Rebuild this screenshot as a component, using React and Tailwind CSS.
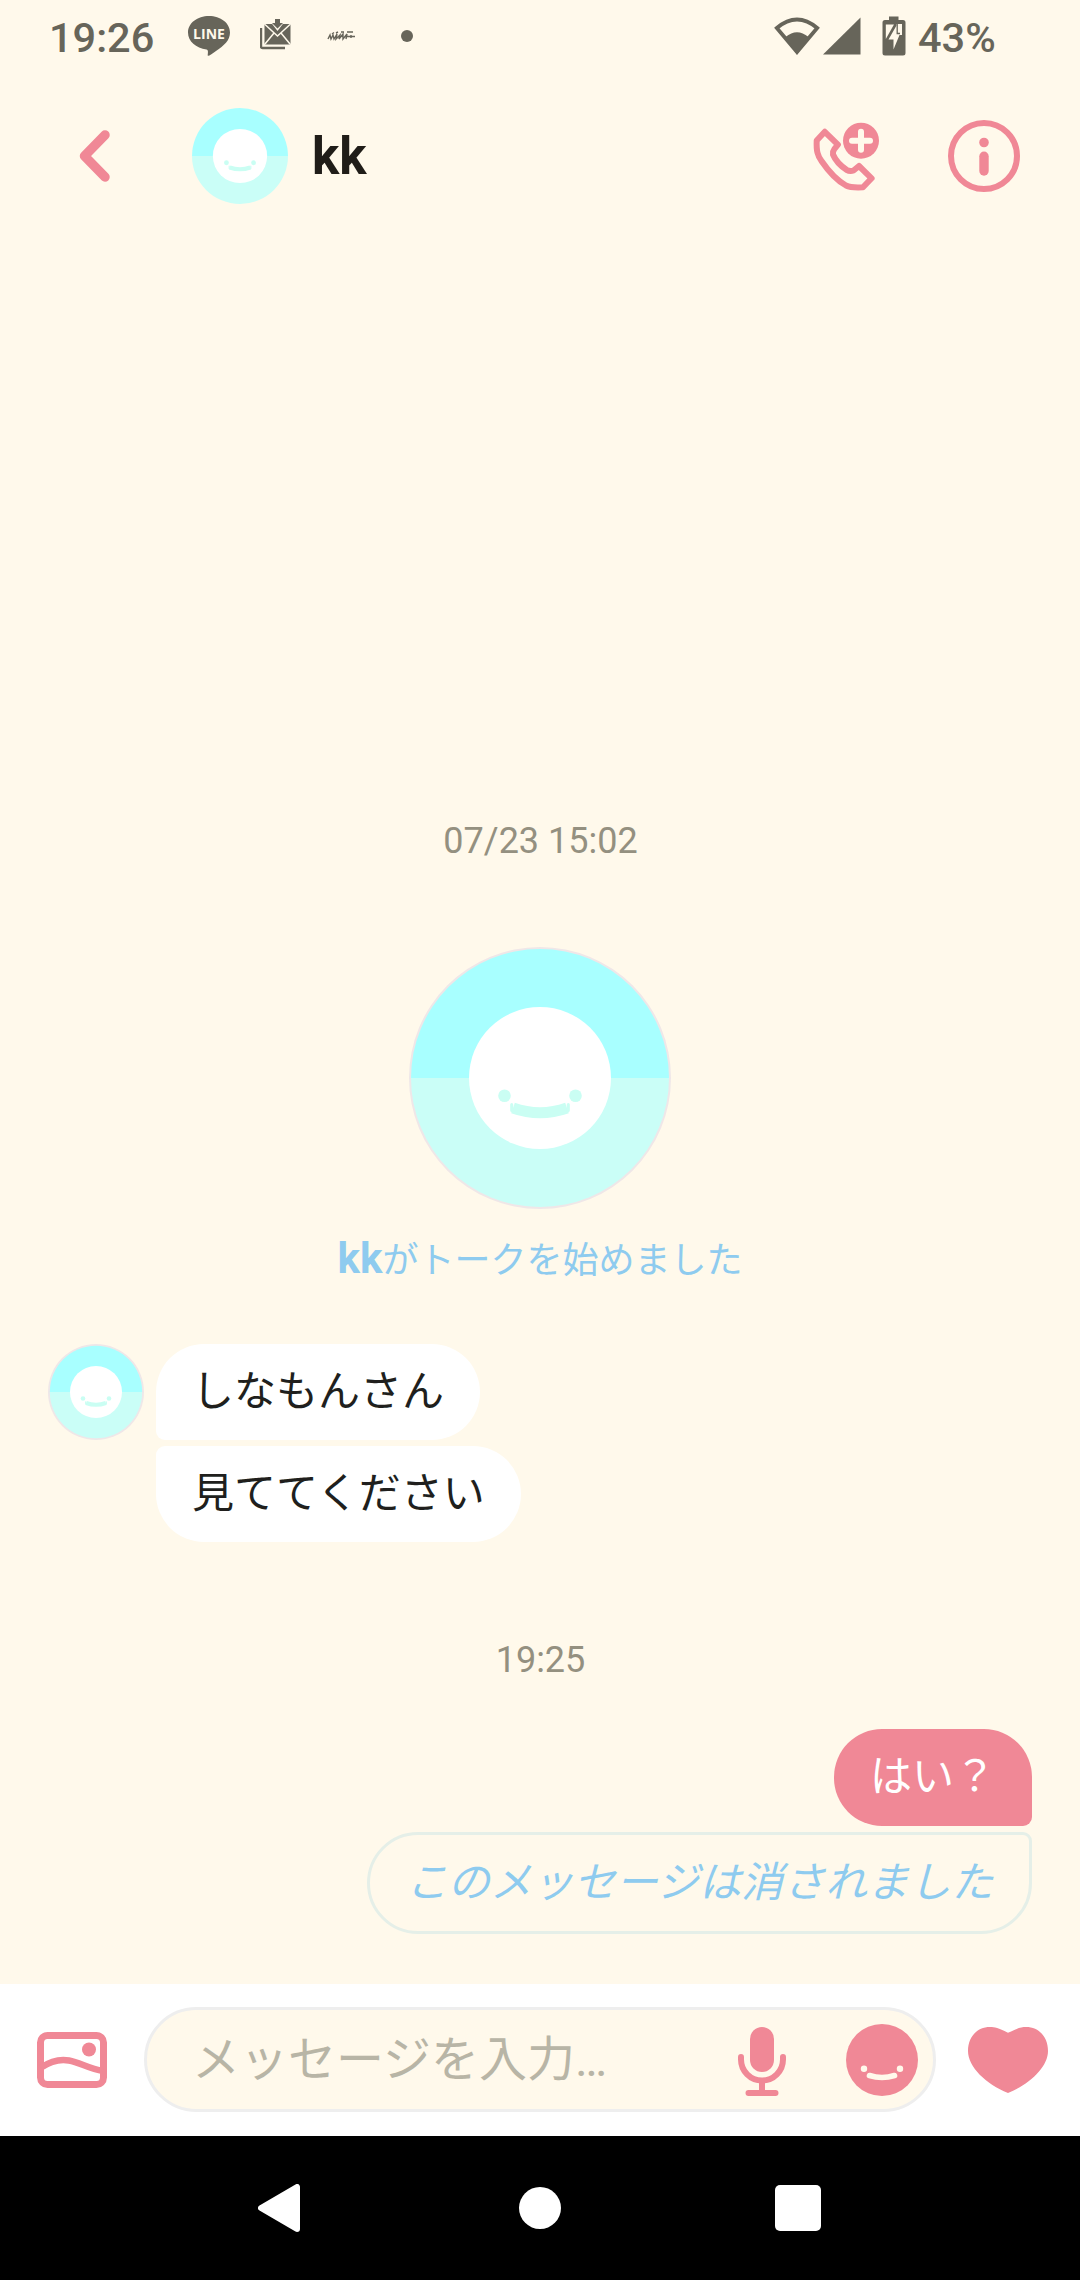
const PINK = "#f08896";
const STATUS = "#67655a";

function Avatar({ className, face = 71, ring = 2 }) {
  const r = 131 - ring;
  const k = face / 71;
  return (
    <svg className={className} viewBox="-131 -131 262 262" aria-hidden="true">
      {ring > 0 && <circle r="131" fill="#efe7e8" />}
      <path d={`M${-r} 0A${r} ${r} 0 0 1 ${r} 0Z`} fill="#a8ffff" />
      <path d={`M${-r} 0A${r} ${r} 0 0 0 ${r} 0Z`} fill="#cafef7" />
      <g transform={`scale(${k})`}>
        <circle r="71" fill="#fff" />
        <circle cx="-35.5" cy="17.7" r="6.3" fill="#cafef3" />
        <circle cx="35.5" cy="17.7" r="6.3" fill="#cafef3" />
        <path d="M-27 30Q0 39.5 27 30" fill="none" stroke="#cafef3" strokeWidth="11" />
        <path d="M-28.300 26.500V32.500M28.300 26.500V32.500" stroke="#cafef3" strokeWidth="3" strokeLinecap="round" />
      </g>
    </svg>
  );
}

function StatusBar() {
  return (
    <div className="flex h-[72px] items-center pl-[49px] pr-[84px] text-[#67655a]">
      <span className="w-[139px] pt-[3px] text-[41.500px] font-medium leading-[72px]">19:26</span>
      <div className="relative h-[42px] w-[42px]">
        <svg className="block h-[42px] w-[42px]" viewBox="0 0 42 42">
          <path d="M21 1C9.500 1 0 8 0 17.500C0 26.500 8 33 18.500 34.500C20.500 35 20 37 19.700 40.500C20.500 41.500 23 39.500 28 36C36 30.500 42 25.500 42 17.500C42 8 32.500 1 21 1Z" fill={STATUS} />
        </svg>
        <span className="absolute inset-x-0 top-[12px] text-center font-['Open_Sans'] text-[14px] font-bold leading-[14px] text-[#fff9eb]">LINE</span>
      </div>
      <svg className="ml-[30px] h-[32px] w-[31px] -translate-y-[2px]" viewBox="0 0 31 32">
        <path d="M1 10V28.500Q1 30 2.500 30H25" fill="none" stroke={STATUS} strokeWidth="2.400" />
        <rect x="4.500" y="6" width="26" height="20.500" rx="1.500" fill={STATUS} />
        <path d="M5 6.500L17.500 18L30 6.500M5 26L14 15M30 26L21 15" fill="none" stroke="#fff9eb" strokeWidth="1.500" />
        <path d="M11 4.500H24L17.500 13Z" fill="#fff9eb" />
        <path d="M15 1H20V5H23L17.500 10.500L12 5H15Z" fill={STATUS} />
      </svg>
      <svg className="ml-[36px] h-[10px] w-[29px]" viewBox="0 0 29 10">
        <path d="M1 8L3 4L4 8L6 4L7 8L10 3L9 8L13 4L12 8L16 3L16 8L20 3L19 8M18 5.500H28M5 3L7 1.500M9 2L11 1M14 1H17M20 1H26M24 4V7" fill="none" stroke={STATUS} strokeWidth="1.400" />
      </svg>
      <span className="ml-[45px] h-3 w-3 rounded-full bg-[#67655a]" />
      <svg className="ml-auto h-[40px] w-[46px]" viewBox="0 0 46 40">
        <path d="M2.800 12Q23 -5 43.200 12L23 36Z" fill="none" stroke={STATUS} strokeWidth="3.800" />
        <path d="M11.500 21Q23 11.500 34.500 21L23 38.500Z" fill={STATUS} />
      </svg>
      <svg className="ml-[3px] h-[40px] w-[38px]" viewBox="0 0 38 40">
        <path d="M37.500 1.500V38.500H0Z" fill={STATUS} />
      </svg>
      <svg className="ml-[21px] h-[40px] w-[24px]" viewBox="0 0 24 40">
        <path d="M7 0.500H16.500V4H21Q23.500 4 23.500 6.500V37Q23.500 39.500 21 39.500H3Q.5 39.500 .5 37V6.500Q.5 4 3 4H7Z" fill={STATUS} />
        <path d="M3.800 8.500H12L3.800 23Z" fill="#fff9eb" />
        <path d="M14.500 8H20V19H17.500L11.500 33.500V23.500H6.500L14.500 9.500Z" fill="#fff9eb" />
        <path d="M15.200 8V17.500H18" fill="none" stroke={STATUS} strokeWidth="1.300" />
      </svg>
      <span className="ml-[12px] w-[78px] whitespace-nowrap pt-[3px] text-[41.500px] font-medium leading-[72px]">43%</span>
    </div>
  );
}

function Header() {
  return (
    <header className="flex h-[168px] items-center pl-[74px] pr-[60px]">
      <svg className="h-[60px] w-[40px]" viewBox="0 0 40 60">
        <path d="M31 9L10.500 30L31 51" fill="none" stroke={PINK} strokeWidth="9.500" strokeLinecap="round" strokeLinejoin="round" />
      </svg>
      <Avatar className="ml-[78px] h-24 w-24" face={74} ring={0} />
      <h1 className="ml-[24px] pt-[2px] text-[51px] font-bold leading-[60px] text-[#201d18]">kk</h1>
      <svg className="ml-auto h-[72px] w-[72px]" viewBox="0 0 72 72">
        <path d="M14.800 11.800L6.700 20.500C6.300 31 7.500 35.500 11.500 41C19 52 28 61 36 65.500C41 68 46 67.700 53 67.300L61.600 58.300L49 46L43.500 50.500Q40 51.800 36.500 49.800Q26.500 43 23 34.500Q22.500 31.500 24.500 28.800L27.900 24.700Z" fill="none" stroke={PINK} strokeWidth="6" strokeLinejoin="round" />
        <circle cx="51" cy="20.700" r="18" fill={PINK} />
        <path d="M42 20.700H60M51 11.700V29.700" stroke="#fff9eb" strokeWidth="6" strokeLinecap="round" />
      </svg>
      <svg className="ml-[66px] h-[72px] w-[72px]" viewBox="0 0 72 72">
        <circle cx="36" cy="36" r="33" fill="none" stroke={PINK} strokeWidth="6" />
        <circle cx="36" cy="22.500" r="4.800" fill={PINK} />
        <path d="M36 36.300V51" stroke={PINK} strokeWidth="9.400" strokeLinecap="round" />
      </svg>
    </header>
  );
}

function Conversation() {
  return (
    <main className="flex flex-1 flex-col">
      <time className="mt-[577px] pl-[1px] text-center text-[36px] leading-[48px] text-[#949080]">07/23 15:02</time>
      <Avatar className="mx-auto mt-[82px] h-[262px] w-[262px]" />
      <p className="mt-[22px] text-center text-[36px] leading-[56px] text-[#8ecbef]">
        <b className="text-[42px] font-bold">kk</b>がトークを始めました
      </p>
      <div className="mt-[55px] flex gap-3 pl-12 text-[42px] leading-[96px] text-[#201f1d]">
        <Avatar className="h-24 w-24" ring={5} />
        <div className="flex flex-col items-start gap-1.5">
          <p className="h-24 rounded-[48px] rounded-bl-[9px] bg-white px-9">しなもんさん</p>
          <p className="h-24 rounded-[48px] rounded-tl-[9px] bg-white px-9">見ててください</p>
        </div>
      </div>
      <time className="mt-[94px] pl-[1px] text-center text-[36px] leading-[48px] text-[#949080]">19:25</time>
      <div className="mt-[45px] flex flex-col items-end gap-1.5 pr-12 text-[42px]">
        <p className="h-[97px] rounded-[48px] rounded-br-[9px] bg-[#f08896] px-9 leading-[96px] text-white">はい？</p>
        <p className="h-[102px] rounded-[51px] rounded-tr-[9px] border-[3px] border-[#e5efe8] px-9 italic leading-[96px] text-[#8ecbef]">このメッセージは消されました</p>
      </div>
    </main>
  );
}

function Composer() {
  return (
    <footer className="flex h-[152px] items-center bg-white pl-[37px] pr-[32px]">
      <svg className="h-[56px] w-[70px]" viewBox="0 0 70 56">
        <rect x="3.500" y="3.500" width="63" height="49" rx="7" fill="none" stroke={PINK} strokeWidth="7" />
        <circle cx="52" cy="17.500" r="7" fill={PINK} />
        <path d="M4 35.500C14 29 22 26.500 32 28.500C43 30.500 52 37 66 39" fill="none" stroke={PINK} strokeWidth="6.500" />
      </svg>
      <div className="mb-[1px] ml-[37px] flex h-[105px] w-[792px] items-center rounded-full border-[3px] border-[#eeeeee] bg-[#fff9eb] pl-[45px] pr-[15px]">
        <span className="text-[48px] leading-[99px] text-[#b8b5a6]">メッセージを入力…</span>
        <svg className="ml-auto h-[72px] w-[48px]" viewBox="0 0 48 72">
          <rect x="12" y="3" width="24" height="45" rx="12" fill={PINK} />
          <path d="M3 33V35.500A21 21 0 0 0 45 35.500V33M24 57V67M10.500 69H37.500" fill="none" stroke={PINK} strokeWidth="6" strokeLinecap="round" />
        </svg>
        <svg className="ml-[60px] h-[72px] w-[72px]" viewBox="0 0 72 72">
          <circle cx="36" cy="36" r="36" fill={PINK} />
          <circle cx="18" cy="44.700" r="3.200" fill="#fff9eb" />
          <circle cx="54" cy="44.700" r="3.200" fill="#fff9eb" />
          <path d="M23.500 51.500Q36 55.500 48.500 51.500" fill="none" stroke="#fff9eb" strokeWidth="5.600" strokeLinecap="round" />
        </svg>
      </div>
      <svg className="ml-auto h-[66px] w-[80px]" viewBox="0 0 80 66">
        <path d="M40 5.700C50 1 53 0 58 0C71 0 80 10 80 24C80 40 62 57 40 66C18 57 0 40 0 24C0 10 9 0 22 0C27 0 30 1 40 5.700Z" fill={PINK} />
      </svg>
    </footer>
  );
}

function NavBar() {
  return (
    <nav className="flex h-36 items-center bg-black pl-[258px] pr-[259px]">
      <svg className="h-12 w-[42px]" viewBox="0 0 42 48">
        <path d="M39 3V45L3 24Z" fill="#fff" stroke="#fff" strokeWidth="6" strokeLinejoin="round" />
      </svg>
      <span className="ml-[219px] h-[42px] w-[42px] rounded-full bg-white" />
      <span className="ml-auto h-[46px] w-[46px] rounded-[5px] bg-white" />
    </nav>
  );
}

export default function App() {
  return (
    <div className="flex h-[2280px] w-[1080px] flex-col overflow-hidden bg-[#fff9eb] font-['Roboto','Noto_Sans_CJK_JP',sans-serif]" lang="ja">
      <StatusBar />
      <Header />
      <Conversation />
      <Composer />
      <NavBar />
    </div>
  );
}
